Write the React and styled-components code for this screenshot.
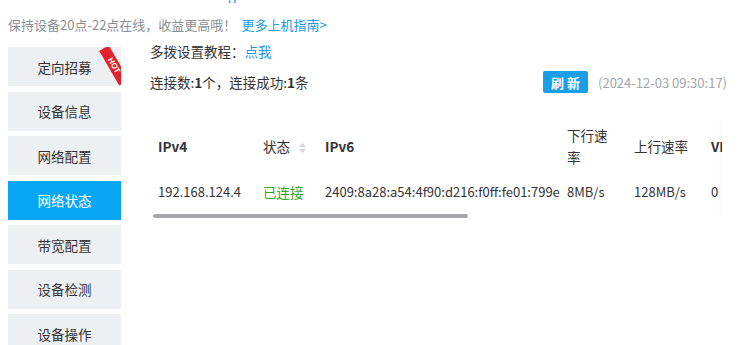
import React from "react";
import styled, { createGlobalStyle } from "styled-components";

const Global = createGlobalStyle`
  html, body { margin: 0; padding: 0; background: #fff; overflow: hidden; }
  body { font-family: "Noto Sans CJK SC", sans-serif; color: #333; }
`;

const Page = styled.div`
  width: 738px;
  height: 345px;
  padding-left: 8px;
  box-sizing: border-box;
  overflow: hidden;
`;

const Clip = styled.div`
  height: 3px;
  overflow: hidden;
`;

const Ghost = styled.div`
  padding-left: 220px;
  margin-top: -15px;
  font-size: 14px;
  line-height: 18px;
  color: #1a9be6;
`;

const Notice = styled.div`
  margin-top: 12px;
  font-size: 13px;
  line-height: 20px;
  color: #8a8f94;
  white-space: nowrap;
`;

const Link = styled.a`
  color: #1a9be6;
  text-decoration: none;
  margin-left: ${(p) => p.$gap || 0}px;
`;

const Main = styled.div`
  display: flex;
  align-items: flex-start;
  gap: 29px;
  margin-top: 12px;
`;

const Sidebar = styled.nav`
  width: 113px;
  flex: none;
  display: flex;
  flex-direction: column;
  gap: 5.5px;
`;

const Item = styled.div`
  position: relative;
  overflow: hidden;
  height: 39px;
  display: flex;
  align-items: center;
  justify-content: center;
  font-size: 13.5px;
  background: ${(p) => (p.$active ? "#0aa6f6" : "#edf0f3")};
  color: ${(p) => (p.$active ? "#fff" : "#333")};
`;

const Ribbon = styled.span`
  position: absolute;
  left: 86px;
  top: 13px;
  width: 40px;
  height: 11px;
  background: #e4202b;
  color: #fff;
  font-family: "Liberation Sans", sans-serif;
  font-weight: bold;
  font-size: 8px;
  line-height: 11px;
  text-align: center;
  transform: rotate(60deg);
`;

const Content = styled.div`
  width: 580px;
  margin-top: -6px;
  display: flex;
  flex-direction: column;
`;

const Line = styled.div`
  font-size: 13.5px;
  line-height: 20px;
  color: #333;
  white-space: nowrap;
`;

const StatsRow = styled.div`
  margin-top: 10px;
  height: 22px;
  display: flex;
  align-items: center;
  justify-content: space-between;
`;

const B = styled.b`
  font-weight: 700;
`;

const RightGroup = styled.div`
  display: flex;
  align-items: center;
  gap: 10px;
  padding-right: 3px;
`;

const Button = styled.button`
  height: 22px;
  width: 45px;
  border: none;
  border-radius: 2px;
  background: #1a9ee8;
  color: #fff;
  font-family: "Noto Sans CJK SC", sans-serif;
  font-weight: 700;
  font-size: 13px;
  padding: 0;
  letter-spacing: 3px;
  text-indent: 3px;
`;

const Stamp = styled.span`
  font-size: 13px;
  color: #a3a7ab;
`;

const TableWrap = styled.div`
  position: relative;
  margin-top: 26px;
  width: 572px;
  overflow: hidden;
  &::after {
    content: "";
    position: absolute;
    right: 0;
    top: -6px;
    bottom: -14px;
    width: 1px;
    box-shadow: 2px 0 6px rgba(0, 0, 0, 0.12);
  }
`;

const Table = styled.table`
  border-collapse: collapse;
  table-layout: fixed;
  width: 640px;
  font-size: 13px;
`;

const Th = styled.th`
  text-align: left;
  vertical-align: middle;
  padding: 5px 8px;
  line-height: 22px;
  font-size: 13.5px;
  font-weight: ${(p) => (p.$latin ? 700 : 400)};
  color: #333;
  white-space: ${(p) => (p.$wrap ? "normal" : "nowrap")};
`;

const Td = styled.td`
  padding: 8px;
  line-height: 22px;
  white-space: nowrap;
  font-size: ${(p) => (p.$cjk ? "13.5px" : "13px")};
  color: ${(p) => p.$color || "#333"};
`;

const SortBox = styled.span`
  display: inline-flex;
  flex-direction: column;
  vertical-align: middle;
  margin-left: 9px;
  gap: 2px;
`;

const ScrollThumb = styled.div`
  margin: 3px 0 0 3px;
  width: 315px;
  height: 4px;
  border-radius: 2px;
  background: #a1a7ab;
`;

const menu = ["定向招募", "设备信息", "网络配置", "网络状态", "带宽配置", "设备检测", "设备操作"];

function SortIcon() {
  return (
    <SortBox>
      <svg width="7" height="4" viewBox="0 0 7 4"><path d="M3.5 0 L7 4 L0 4 Z" fill="#d3d6d9" /></svg>
      <svg width="7" height="4" viewBox="0 0 7 4"><path d="M0 0 L7 0 L3.5 4 Z" fill="#d3d6d9" /></svg>
    </SortBox>
  );
}

export default function App() {
  return (
    <Page>
      <Global />
      <Clip>
        <Ghost>g</Ghost>
      </Clip>
      <Notice>
        保持设备20点-22点在线，收益更高哦！<Link $gap={5}>更多上机指南&gt;</Link>
      </Notice>
      <Main>
        <Sidebar>
          {menu.map((m, i) => (
            <Item key={m} $active={i === 3}>
              {m}
              {i === 0 && <Ribbon>HOT</Ribbon>}
            </Item>
          ))}
        </Sidebar>
        <Content>
          <Line>
            多拨设置教程：<Link>点我</Link>
          </Line>
          <StatsRow>
            <Line>
              连接数:<B>1</B>个，连接成功:<B>1</B>条
            </Line>
            <RightGroup>
              <Button>刷新</Button>
              <Stamp>(2024-12-03 09:30:17)</Stamp>
            </RightGroup>
          </StatsRow>
          <TableWrap>
            <Table>
              <colgroup>
                <col style={{ width: 105 }} />
                <col style={{ width: 62 }} />
                <col style={{ width: 242 }} />
                <col style={{ width: 67 }} />
                <col style={{ width: 77 }} />
                <col style={{ width: 87 }} />
              </colgroup>
              <thead>
                <tr>
                  <Th $latin>IPv4</Th>
                  <Th>状态<SortIcon /></Th>
                  <Th $latin>IPv6</Th>
                  <Th $wrap>下行速率</Th>
                  <Th>上行速率</Th>
                  <Th $latin>VLAN</Th>
                </tr>
              </thead>
              <tbody>
                <tr>
                  <Td>192.168.124.4</Td>
                  <Td $cjk $color="#2fa42f">已连接</Td>
                  <Td>2409:8a28:a54:4f90:d216:f0ff:fe01:799e</Td>
                  <Td>8MB/s</Td>
                  <Td>128MB/s</Td>
                  <Td>0</Td>
                </tr>
              </tbody>
            </Table>
            <ScrollThumb />
          </TableWrap>
        </Content>
      </Main>
    </Page>
  );
}
